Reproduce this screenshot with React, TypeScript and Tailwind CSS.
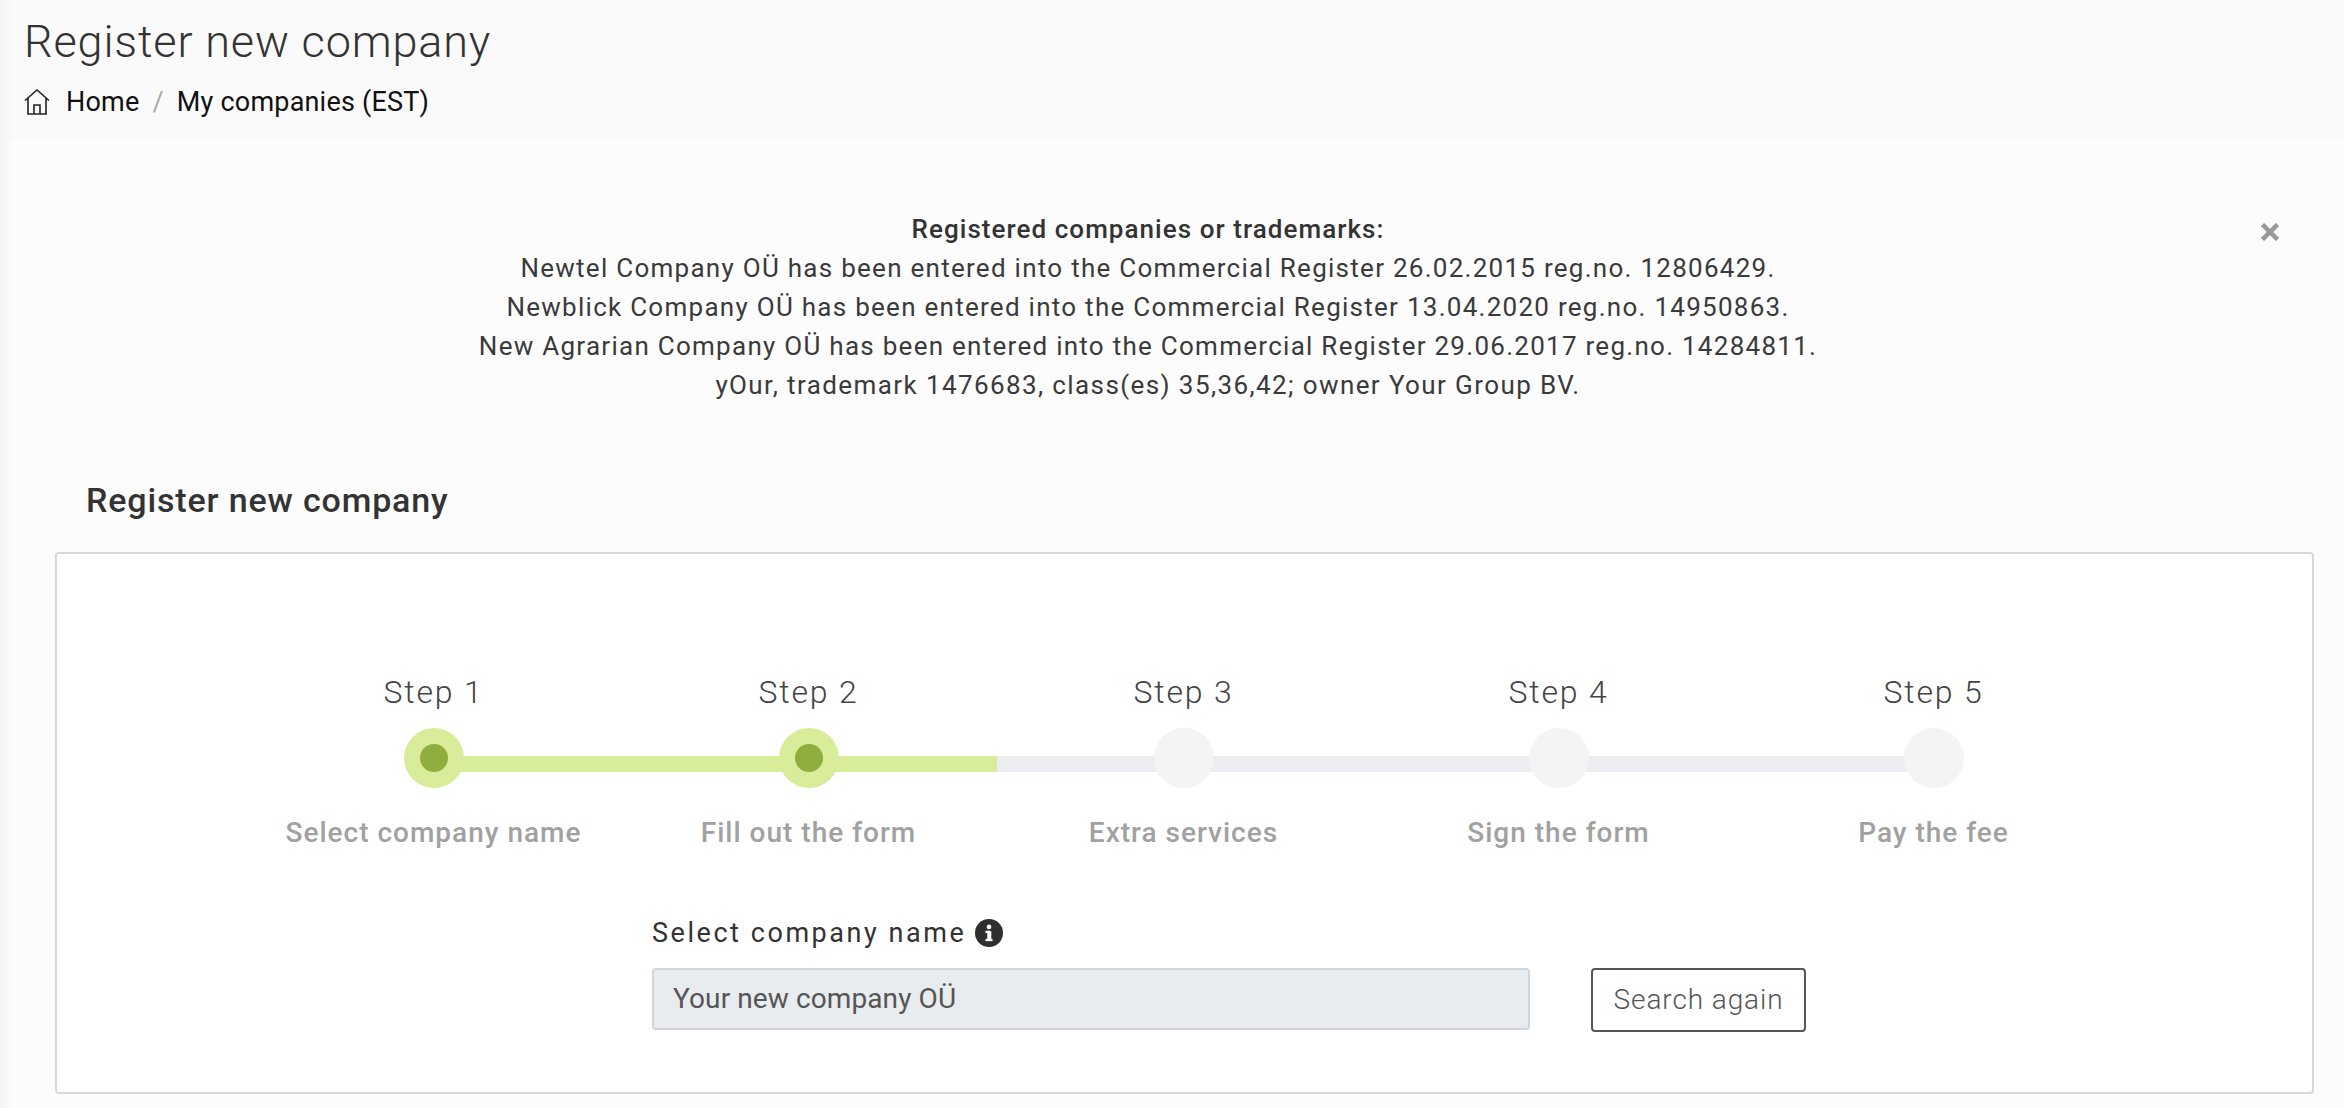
import React from "react";

const steps = [
  { n: "Step 1", l: "Select company name", on: true },
  { n: "Step 2", l: "Fill out the form", on: true },
  { n: "Step 3", l: "Extra services", on: false },
  { n: "Step 4", l: "Sign the form", on: false },
  { n: "Step 5", l: "Pay the fee", on: false },
];

export default function App() {
  return (
    <div className="relative min-h-[1108px] w-[2344px] overflow-hidden bg-[#fcfcfc] font-['Roboto',sans-serif] text-[#2f2f2f]">
      <div className="pointer-events-none absolute inset-y-0 left-0 w-[14px] bg-gradient-to-r from-[#f5f5f5] to-transparent" />
      <header className="h-[140px] bg-[#fafafa] pl-[24px] pt-[17px]">
        <h1 className="text-[45px] font-light leading-[50px] tracking-[0.85px] text-[#333]">Register new company</h1>
        <nav className="mt-[17px] flex items-center text-[27px] leading-[36px] tracking-[0.2px] text-[#111]">
          <svg width="26" height="26" viewBox="0 0 26 26" fill="none" stroke="#222" strokeWidth="1.6">
            <path d="M1 11.5 13 1l12 10.5M4 9v16h18V9M10 25v-9h6v9" />
          </svg>
          <span className="ml-[16px]">Home</span>
          <span className="mx-[13px] text-[#aaa]">/</span>
          <span>My companies (EST)</span>
        </nav>
      </header>
      <section className="relative mt-[70px] pr-[48px] text-center text-[26px] leading-[39px] tracking-[1.27px] text-[#3a3a3a]">
        <div className="font-medium tracking-[1.05px] text-[#333]">Registered companies or trademarks:</div>
        <div>Newtel Company OÜ has been entered into the Commercial Register 26.02.2015 reg.no. 12806429.</div>
        <div>Newblick Company OÜ has been entered into the Commercial Register 13.04.2020 reg.no. 14950863.</div>
        <div>New Agrarian Company OÜ has been entered into the Commercial Register 29.06.2017 reg.no. 14284811.</div>
        <div className="tracking-[1.4px]">yOur, trademark 1476683, class(es) 35,36,42; owner Your Group BV.</div>
        <svg className="absolute right-[65px] top-[13px]" width="18" height="18" viewBox="0 0 18 18" stroke="#999" strokeWidth="4.5">
          <path d="M1.5 1.5 16.5 16.5M16.5 1.5 1.5 16.5" />
        </svg>
      </section>
      <h2 className="ml-[86px] mt-[73px] text-[34px] font-medium leading-[44px] tracking-[0.85px] text-[#333]">Register new company</h2>
      <main className="ml-[55px] mt-[30px] h-[542px] w-[2259px] rounded-[4px] border-2 border-[#d8d8d8] bg-white">
        <div className="ml-[189px] mt-[118px] grid w-[1875px] grid-cols-5">
          {steps.map((s, i) => (
            <div key={s.n} className="flex flex-col items-center">
              <div className="text-[32px] font-light leading-[40px] tracking-[1.8px] text-[#444]">{s.n}</div>
              <div className="relative mt-[16px] h-[60px] w-full">
                {i < 4 && (
                  <div className={`absolute left-1/2 top-[28px] h-[16px] w-full ${i === 0 ? "bg-[#d9ec9a]" : "bg-[#ecedf1]"}`} />
                )}
                {i === 1 && <div className="absolute left-1/2 top-[28px] h-[16px] w-[188px] bg-[#d9ec9a]" />}
                <div className={`absolute left-1/2 top-0 flex h-[60px] w-[60px] -translate-x-1/2 items-center justify-center rounded-full ${s.on ? "bg-[#d9ec9a]" : "bg-[#f4f4f5]"}`}>
                  {s.on && <div className="h-[28px] w-[28px] rounded-full bg-[#8fae3e]" />}
                </div>
              </div>
              <div className="mt-[27px] text-[28px] font-medium leading-[36px] tracking-[1px] text-[#a1a1a1]">{s.l}</div>
            </div>
          ))}
        </div>
        <div className="ml-[595px] mt-[64px]">
          <div className="flex items-center text-[27px] leading-[36px] tracking-[2.55px] text-[#333]">
            Select company name
            <svg className="ml-[9px]" width="28" height="28" viewBox="0 0 24 24">
              <circle cx="12" cy="12" r="12" fill="#2f2f2f" />
              <rect x="10.5" y="10.5" width="3.5" height="8" fill="#fff" />
              <rect x="9" y="17" width="6" height="2" fill="#fff" />
              <rect x="9" y="10" width="4" height="2" fill="#fff" />
              <circle cx="12" cy="6.8" r="2" fill="#fff" />
            </svg>
          </div>
          <div className="mt-[17px] flex items-start">
            <div className="flex h-[62px] w-[878px] items-center rounded-[4px] border-2 border-[#d2d6da] bg-[#e9ecef] pl-[19px] text-[28px] tracking-[0.1px] text-[#555]">Your new company OÜ</div>
            <button className="ml-[61px] h-[64px] w-[215px] rounded-[4px] border-2 border-[#555] bg-white text-[28px] font-light tracking-[0.9px] text-[#555]">Search again</button>
          </div>
        </div>
      </main>
    </div>
  );
}
